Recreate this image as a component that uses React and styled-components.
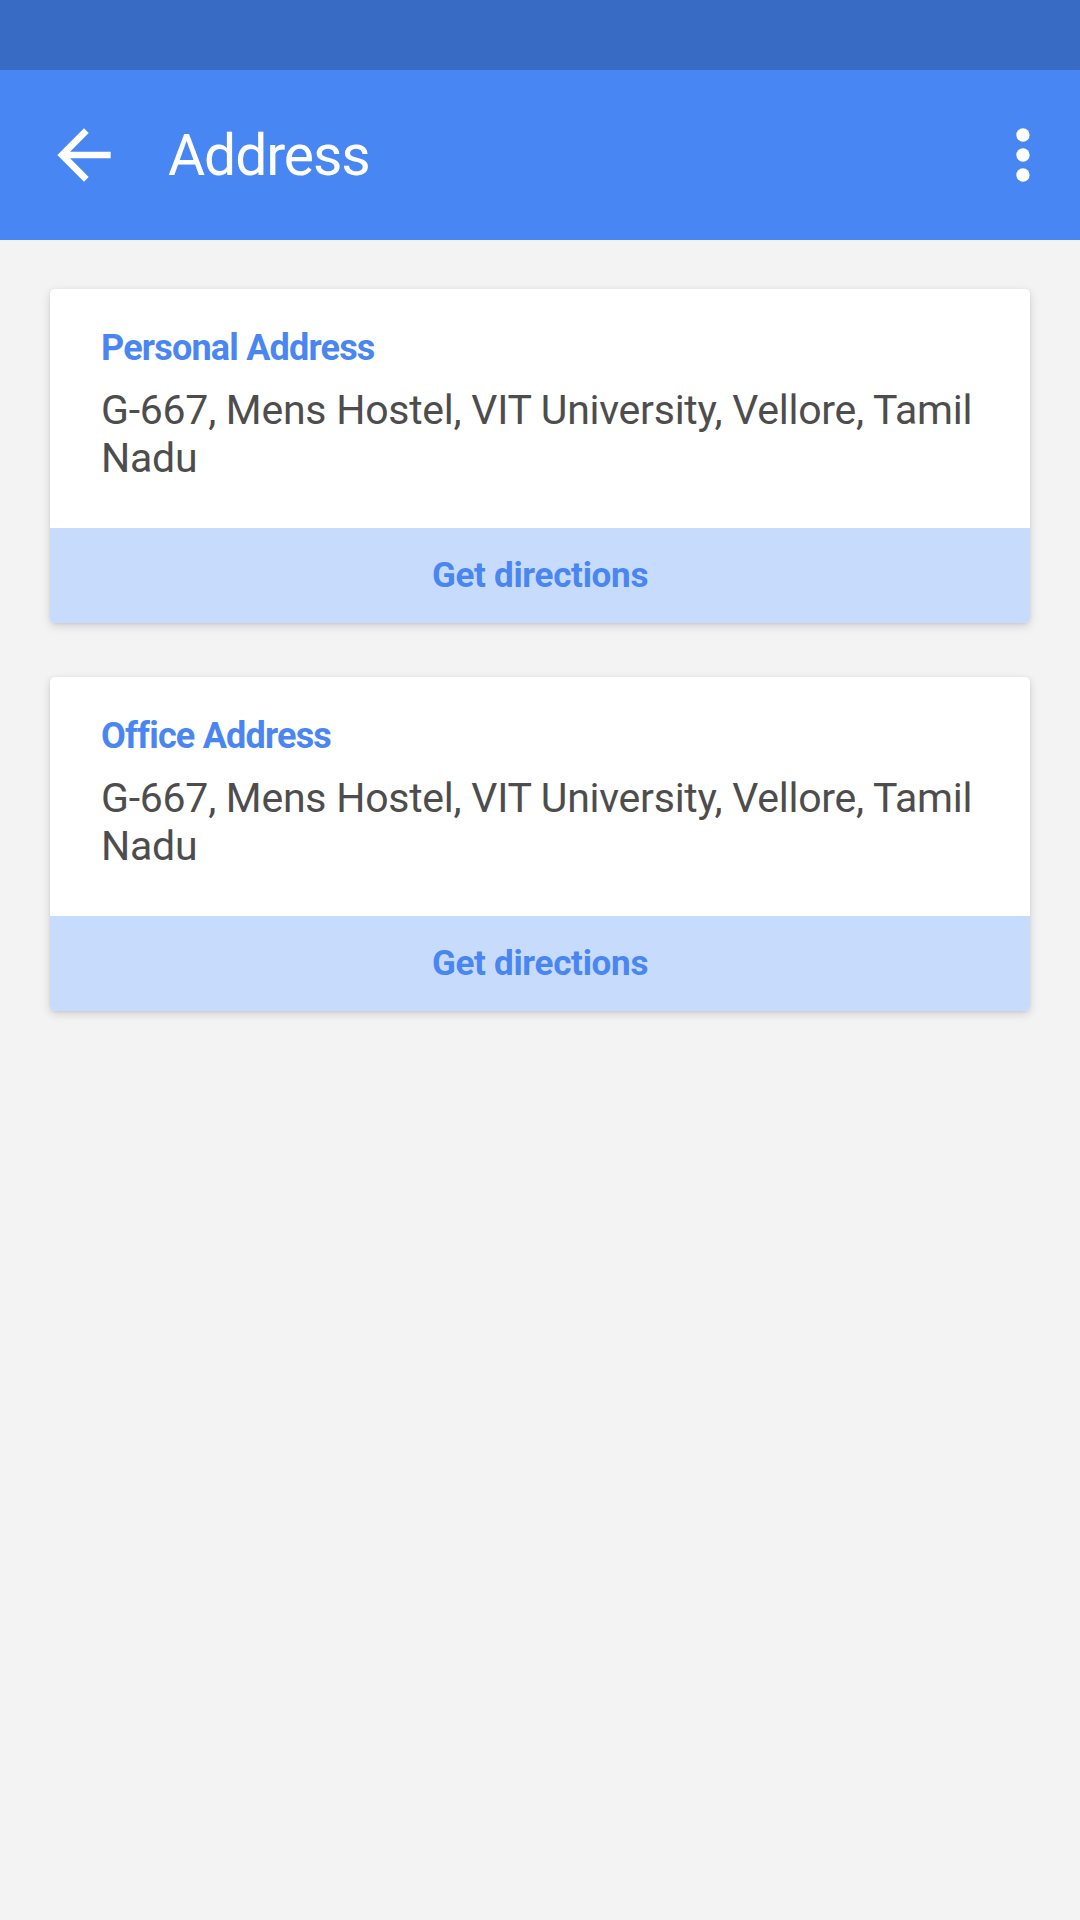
import React from 'react';
import styled, { createGlobalStyle } from 'styled-components';

const addresses = [
  { label: 'Personal Address', text: 'G-667, Mens Hostel, VIT University, Vellore, Tamil Nadu' },
  { label: 'Office Address', text: 'G-667, Mens Hostel, VIT University, Vellore, Tamil Nadu' },
];

const BackIcon = () => (
  <svg width="80" height="80" viewBox="0 0 24 24" fill="#fff">
    <path d="M20 11H7.83l5.59-5.59L12 4l-8 8 8 8 1.41-1.41L7.83 13H20v-2z" />
  </svg>
);

const MoreIcon = () => (
  <svg width="80" height="80" viewBox="0 0 24 24" fill="#fff">
    <circle cx="12" cy="6" r="2" />
    <circle cx="12" cy="12" r="2" />
    <circle cx="12" cy="18" r="2" />
  </svg>
);

const App = () => {
  return (
    <>
      <GlobalStyle />
      <Screen>
        <StatusBar />
        <AppBar>
          <IconButton aria-label="back">
            <BackIcon />
          </IconButton>
          <Title>Address</Title>
          <IconButton aria-label="more">
            <MoreIcon />
          </IconButton>
        </AppBar>
        <CardList>
          {addresses.map((address) => (
            <Card key={address.label}>
              <CardBody>
                <Label>{address.label}</Label>
                <AddressText>{address.text}</AddressText>
              </CardBody>
              <DirectionsButton>Get directions</DirectionsButton>
            </Card>
          ))}
        </CardList>
      </Screen>
    </>
  );
};

const GlobalStyle = createGlobalStyle`
  html, body {
    margin: 0;
    padding: 0;
    background: #f3f3f3;
    font-family: Roboto, "Noto Sans", sans-serif;
  }
  * {
    box-sizing: border-box;
  }
`;

const Screen = styled.div`
  min-height: 1920px;
  background: #f3f3f3;
`;

const StatusBar = styled.div`
  height: 70px;
  background: #386bc4;
`;

const AppBar = styled.header`
  height: 170px;
  display: flex;
  align-items: center;
  padding: 0 17px 0 44px;
  background: #4786f3;
`;

const IconButton = styled.div`
  width: 80px;
  height: 80px;
  display: flex;
  align-items: center;
  justify-content: center;
  svg {
    display: block;
  }
`;

const Title = styled.h1`
  flex: 1;
  margin: 0 0 0 44px;
  color: #fff;
  font-size: 57px;
  font-weight: 400;
  line-height: 57px;
  letter-spacing: -1.1px;
`;

const CardList = styled.main`
  display: flex;
  flex-direction: column;
  gap: 54px;
  padding: 49px 50px;
`;

const Card = styled.section`
  background: #fff;
  border-radius: 5px;
  overflow: hidden;
  box-shadow: 0 3px 10px rgba(0, 0, 0, 0.14), 0 1px 3px rgba(0, 0, 0, 0.07);
`;

const CardBody = styled.div`
  padding: 38px 51px 46px;
`;

const Label = styled.div`
  color: #4a86f1;
  font-size: 36px;
  font-weight: 700;
  line-height: 43px;
  letter-spacing: -0.8px;
`;

const AddressText = styled.div`
  margin-top: 16px;
  color: #4d4d4d;
  font-size: 41px;
  line-height: 48px;
  letter-spacing: -0.25px;
`;

const DirectionsButton = styled.div`
  height: 95px;
  line-height: 95px;
  text-align: center;
  background: #c7dcfd;
  color: #4a86f1;
  font-size: 35px;
  font-weight: 700;
  letter-spacing: -0.3px;
`;

export default App;
